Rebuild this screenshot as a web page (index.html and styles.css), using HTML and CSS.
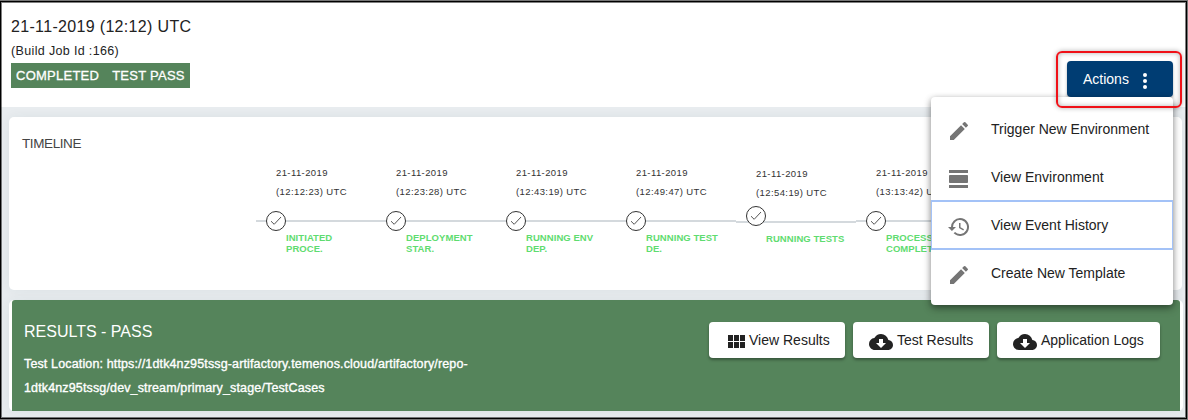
FILE: index.html
```html
<!DOCTYPE html>
<html lang="en">
<head>
<meta charset="utf-8">
<title>Build job</title>
<link rel="stylesheet" href="styles.css">
</head>
<body>
<svg class="defs" width="0" height="0">
  <symbol id="pencil" viewBox="0 0 24 24"><path d="M3 17.25V21h3.75L17.81 9.94l-3.75-3.75L3 17.25zM20.71 7.04a1 1 0 0 0 0-1.41l-2.34-2.34a1 1 0 0 0-1.41 0l-1.83 1.83 3.75 3.75 1.83-1.83z"/></symbol>
  <symbol id="day" viewBox="0 0 24 24"><path d="M2 21h19v-3H2v3zM20 8H3c-.55 0-1 .45-1 1v6c0 .55.45 1 1 1h17c.55 0 1-.45 1-1V9c0-.55-.45-1-1-1zM2 3v3h19V3H2z"/></symbol>
  <symbol id="history" viewBox="0 0 24 24"><path d="M13 3a9 9 0 0 0-9 9H1l3.89 3.89.07.14L9 12H6a7 7 0 1 1 2.06 4.94l-1.42 1.42A9 9 0 1 0 13 3zm-1 5v5l4.28 2.54.72-1.21-3.5-2.08V8H12z"/></symbol>
  <symbol id="cloud" viewBox="0 0 24 24"><path d="M19.35 10.04A7.49 7.49 0 0 0 12 4C9.11 4 6.6 5.64 5.35 8.04A5.994 5.994 0 0 0 0 14c0 3.31 2.69 6 6 6h13c2.76 0 5-2.24 5-5 0-2.64-2.05-4.78-4.65-4.96zM17 13l-5 5-5-5h3V9h4v4h3z"/></symbol>
  <symbol id="grid" viewBox="0 0 24 24"><path d="M4 11h5V5H4v6zm0 7h5v-6H4v6zm6 0h5v-6h-5v6zm6 0h5v-6h-5v6zm-6-7h5V5h-5v6zm6-6v6h5V5h-5z"/></symbol>
  <symbol id="check" viewBox="0 0 20 20"><circle cx="10" cy="10" r="9.5" fill="#fff" stroke="#333" stroke-width="1"/><path d="M5 10.200l3.200 3.100 6.800-7.300" fill="none" stroke="#555" stroke-width="1"/></symbol>
</svg>
<div class="page">
  <header class="header">
    <div class="title">21-11-2019 (12:12) UTC</div>
    <div class="job">(Build Job Id :166)</div>
    <div class="tags"><span>COMPLETED</span><span>TEST PASS</span></div>
  </header>
  <section class="timeline">
    <h2 class="timeline-title">TIMELINE</h2>
    <div class="steps">
      <div class="step"><div class="when">21-11-2019<br>(12:12:23) UTC</div><div class="track"><svg class="check"><use href="#check"/></svg></div><div class="label">INITIATED<br>PROCE.</div></div>
      <div class="step"><div class="when">21-11-2019<br>(12:23:28) UTC</div><div class="track"><svg class="check"><use href="#check"/></svg></div><div class="label">DEPLOYMENT<br>STAR.</div></div>
      <div class="step"><div class="when">21-11-2019<br>(12:43:19) UTC</div><div class="track"><svg class="check"><use href="#check"/></svg></div><div class="label">RUNNING ENV<br>DEP.</div></div>
      <div class="step"><div class="when">21-11-2019<br>(12:49:47) UTC</div><div class="track"><svg class="check"><use href="#check"/></svg></div><div class="label">RUNNING TEST<br>DE.</div></div>
      <div class="step current"><div class="when">21-11-2019<br>(12:54:19) UTC</div><div class="track"><svg class="check"><use href="#check"/></svg></div><div class="label">RUNNING TESTS</div></div>
      <div class="step"><div class="when">21-11-2019<br>(13:13:42) UTC</div><div class="track"><svg class="check"><use href="#check"/></svg></div><div class="label">PROCESS<br>COMPLETED</div></div>
    </div>
  </section>
  <section class="results">
    <div class="results-body">
      <div class="info">
        <h2 class="results-title">RESULTS - PASS</h2>
        <div class="location">Test Location: https://1dtk4nz95tssg-artifactory.temenos.cloud/artifactory/repo-<br>1dtk4nz95tssg/dev_stream/primary_stage/TestCases</div>
      </div>
      <div class="buttons">
        <div class="button view"><svg><use href="#grid"/></svg><span>View Results</span></div>
        <div class="button"><svg><use href="#cloud"/></svg><span>Test Results</span></div>
        <div class="button logs"><svg><use href="#cloud"/></svg><span>Application Logs</span></div>
      </div>
    </div>
  </section>
  <div class="actions"><span>Actions</span><i class="dots"><b></b><b></b><b></b></i></div>
  <div class="menu">
    <div class="item"><svg><use href="#pencil"/></svg><span>Trigger New Environment</span></div>
    <div class="item"><svg><use href="#day"/></svg><span>View Environment</span></div>
    <div class="item focused"><svg><use href="#history"/></svg><span>View Event History</span></div>
    <div class="item"><svg><use href="#pencil"/></svg><span>Create New Template</span></div>
  </div>
  <div class="highlight"></div>
  <div class="frame"></div>
</div>
</body>
</html>
```
FILE: styles.css
```css
* { box-sizing: border-box; }
body { margin: 0; font-family: "Liberation Sans", Arial, sans-serif; color: #222; }
h2 { margin: 0; font-weight: 400; }
.defs { position: absolute; }
.page { position: relative; width: 1188px; height: 420px; overflow: hidden; background: #e8ecef; white-space: nowrap; }
.header { height: 107px; padding: 16px 11px 0; background: #fff; }
.title { font-size: 16px; line-height: 21px; letter-spacing: .33px; }
.job { margin-top: 6px; font-size: 12.500px; line-height: 16px; letter-spacing: .35px; }
.tags { display: flex; gap: 13px; width: 179px; height: 25px; margin-top: 4px; padding: 0 5px; background: #55845b; color: #fff; font-size: 13px; line-height: 25px; letter-spacing: .25px; -webkit-text-stroke: .3px #fff; }
.timeline { height: 173px; margin: 10px 6px 0 9px; padding: 18px 13px 0; border-radius: 5px; background: #fff; box-shadow: 0 0 12px rgba(40,60,70,.06); }
.timeline-title { font-size: 13.500px; line-height: 18px; letter-spacing: -.4px; color: #444; }
.steps { display: flex; padding: 10px 0 0 234px; }
.step { flex: none; width: 120px; }
.when { height: 38px; padding-left: 20px; font-size: 9.500px; line-height: 19px; letter-spacing: .4px; color: #333; }
.track { height: 20px; margin-top: 10px; padding-left: 10px; background: linear-gradient(#d4d9dd, #d4d9dd) 0 9px / 100% 2px no-repeat; }
.check { display: block; width: 20px; height: 20px; }
.label { padding: 1px 0 0 30px; font-size: 9.500px; line-height: 11px; font-weight: 700; letter-spacing: .06px; color: #5fdc70; }
.current .when { padding-top: 1px; }
.current .track { background-position: 0 10px; }
.current .check { position: relative; top: -5px; }
.current .label { padding-top: 2px; }
.results { height: 111px; margin: 10px 5px 0 9px; padding: 0 3px; border-radius: 5px; background: #fff; box-shadow: 0 0 12px rgba(40,60,70,.06); }
.results-body { display: flex; justify-content: space-between; height: 111px; padding: 22px 20px 0 12px; border-radius: 3px 3px 0 0; background: #55845b; color: #fff; }
.results-title { padding-top: 1px; font-size: 16px; line-height: 18px; }
.location { margin-top: 11px; font-size: 12.500px; line-height: 24px; letter-spacing: .14px; -webkit-text-stroke: .35px #fff; }
.buttons { display: flex; gap: 8px; }
.button { display: flex; align-items: center; width: 136px; height: 36px; padding-left: 16px; border-radius: 4px; background: #fff; color: #222; font-size: 14px; box-shadow: 0 2px 3px rgba(0,0,0,.35); }
.button svg { width: 24px; height: 24px; margin-top: 4px; margin-right: 4px; fill: #222; }
.button.view { padding-left: 15px; }
.button.view svg { margin-right: 1px; }
.button.logs { width: 163px; }
.actions { position: absolute; left: 1067px; top: 61px; display: flex; align-items: center; width: 106px; height: 36px; padding-left: 16px; border-radius: 4px; background: #003d73; color: #fff; font-size: 14px; box-shadow: 0 2px 3px rgba(0,0,0,.3); }
.dots { display: flex; flex-direction: column; gap: 2px; margin: 4px 0 0 14px; }
.dots b { width: 4px; height: 4px; border-radius: 50%; background: #fff; }
.menu { position: absolute; left: 931px; top: 97px; width: 242px; height: 208px; padding: 8px 0; border-radius: 4px; background: #fff; box-shadow: 0 2px 6px rgba(0,0,0,.35), 0 4px 10px rgba(0,0,0,.2); }
.item { display: flex; align-items: center; height: 48px; padding-left: 16px; font-size: 14px; }
.item svg { width: 24px; height: 24px; margin: 4px 20px 0 0; fill: #757575; }
.focused { box-shadow: inset 0 0 0 1px #a3c2f7, 0 -1px #a3c2f7, 0 1px #a3c2f7; }
.highlight { position: absolute; left: 1056px; top: 51px; width: 126px; height: 57px; border: 2px solid #f01118; border-radius: 6px; box-shadow: 0 0 5px rgba(0,0,0,.3), inset 0 0 5px rgba(0,0,0,.3); }
.frame { position: absolute; inset: 0 0 0 -1px; border: 1px solid #777; box-shadow: inset 0 0 0 1px #000, inset 0 0 0 2px rgba(0,0,0,.5); }
```
